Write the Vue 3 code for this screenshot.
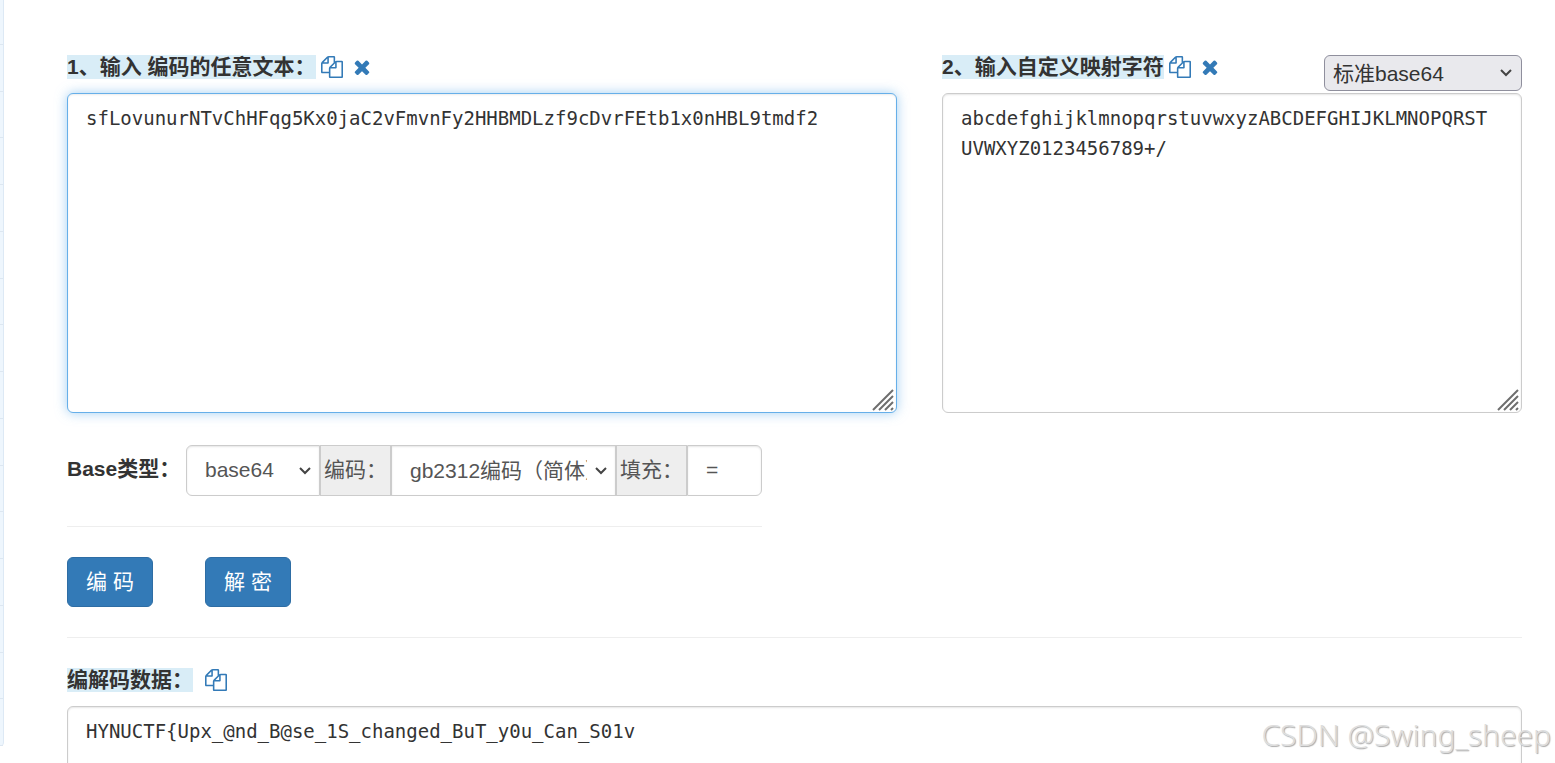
<script setup>
import { ref } from 'vue'

const source = ref('sfLovunurNTvChHFqg5Kx0jaC2vFmvnFy2HHBMDLzf9cDvrFEtb1x0nHBL9tmdf2')
const mapping = ref('abcdefghijklmnopqrstuvwxyzABCDEFGHIJKLMNOPQRSTUVWXYZ0123456789+/')
const output = ref('HYNUCTF{Upx_@nd_B@se_1S_changed_BuT_y0u_Can_S01v')
const padChar = ref('=')

const copyPath =
  'M1696 384q40 0 68 28t28 68v1216q0 40-28 68t-68 28h-960q-40 0-68-28t-28-68v-288h-544q-40 0-68-28t-28-68v-672q0-40 20-88t48-76l408-408q28-28 76-48t88-20h416q40 0 68 28t28 68v328q68-40 128-40h416zm-544 213l-299 299h299v-299zm-640-384l-299 299h299v-299zm196 647l316-316v-416h-384v416q0 40-28 68t-68 28h-416v640h512v-256q0-40 20-88t48-76zm956 804v-1152h-384v416q0 40-28 68t-68 28h-416v640h896z'
const timesPath =
  'M1490 1322q0 40-28 68l-136 136q-28 28-68 28t-68-28l-294-294-294 294q-28 28-68 28t-68-28l-136-136q-28-28-28-68t28-68l294-294-294-294q-28-28-28-68t28-68l136-136q28-28 68-28t68 28l294 294 294-294q28-28 68-28t68 28l136 136q28 28 28 68t-28 68l-294 294 294 294q28 28 28 68z'
</script>

<template>
  <div class="page">
    <ul class="side">
      <li v-for="n in 16" :key="n"></li>
    </ul>

    <main class="content">
      <section class="editors">
        <div class="editor">
          <div class="head">
            <label for="source" class="mark">1、输入 编码的任意文本：</label>
            <button type="button" class="icon" aria-label="复制">
              <svg viewBox="0 0 1792 1792"><path :d="copyPath" /></svg>
            </button>
            <button type="button" class="icon clear" aria-label="清空">
              <svg viewBox="0 0 1792 1792"><path :d="timesPath" /></svg>
            </button>
          </div>
          <div class="area">
            <textarea id="source" v-model="source" class="box active" spellcheck="false"></textarea>
            <svg class="grip" viewBox="0 0 24 24"><path d="M2 22L22 2M8 22L22 8M14 22L22 14M20 22L22 20" /></svg>
          </div>
        </div>

        <div class="editor">
          <div class="head">
            <label for="mapping" class="mark">2、输入自定义映射字符</label>
            <button type="button" class="icon" aria-label="复制">
              <svg viewBox="0 0 1792 1792"><path :d="copyPath" /></svg>
            </button>
            <button type="button" class="icon clear" aria-label="清空">
              <svg viewBox="0 0 1792 1792"><path :d="timesPath" /></svg>
            </button>
            <span class="pick preset">
              <select aria-label="映射表"><option>标准base64</option></select>
              <svg viewBox="0 0 12 8"><path d="M1 1l5 5 5-5" /></svg>
            </span>
          </div>
          <div class="area">
            <textarea id="mapping" v-model="mapping" class="box" spellcheck="false"></textarea>
            <svg class="grip" viewBox="0 0 24 24"><path d="M2 22L22 2M8 22L22 8M14 22L22 14M20 22L22 20" /></svg>
          </div>
        </div>
      </section>

      <section class="options">
        <label for="base" class="title">Base类型：</label>
        <span class="pick base">
          <select id="base"><option>base64</option></select>
          <svg viewBox="0 0 12 8"><path d="M1 1l5 5 5-5" /></svg>
        </span>
        <label for="charset" class="addon">编码：</label>
        <span class="pick charset">
          <select id="charset"><option>gb2312编码（简体）</option></select>
          <svg viewBox="0 0 12 8"><path d="M1 1l5 5 5-5" /></svg>
        </span>
        <label for="pad" class="addon">填充：</label>
        <input id="pad" v-model="padChar" class="pad" type="text" />
      </section>

      <section class="actions">
        <button type="button" class="btn">编 码</button>
        <button type="button" class="btn">解 密</button>
      </section>

      <section class="result">
        <div class="head">
          <label for="output" class="mark">编解码数据：</label>
          <button type="button" class="icon spaced" aria-label="复制">
            <svg viewBox="0 0 1792 1792"><path :d="copyPath" /></svg>
          </button>
        </div>
        <textarea id="output" v-model="output" class="box" spellcheck="false"></textarea>
      </section>
    </main>

    <div class="watermark">CSDN @Swing_sheep</div>
  </div>
</template>

<style>
body {
  margin: 0;
  background: #fff;
}
</style>

<style scoped>
.page,
.page * {
  box-sizing: border-box;
}
.page {
  position: relative;
  display: flex;
  align-items: flex-start;
  height: 100vh;
  overflow: hidden;
  color: #333;
  font: 21px/30px "Liberation Sans", Arial, "Noto Sans CJK SC", sans-serif;
}
button,
select,
input {
  font: inherit;
  color: inherit;
}
.side {
  display: flex;
  flex: none;
  flex-direction: column;
  width: 4px;
  height: 748px;
  margin: -2px 0 0;
  padding: 0;
  list-style: none;
  background: #eef6fd;
  border-right: 1px solid #dde9f5;
  border-bottom-right-radius: 4px;
}
.side li {
  flex: 1;
  border-bottom: 1px solid #dde7f1;
}
.content {
  flex: 1;
  min-width: 0;
  padding: 55px 33px 0 63px;
}
.editors {
  display: grid;
  grid-template-columns: minmax(0, 830fr) minmax(0, 580fr);
  gap: 45px;
}
.head {
  display: flex;
  align-items: flex-start;
  height: 38px;
}
.mark {
  height: 24px;
  line-height: 24px;
  font-weight: 700;
  white-space: nowrap;
  background: #d9edf7;
}
.icon {
  width: 22px;
  height: 24px;
  margin-left: 5px;
  padding: 0;
  border: 0;
  background: none;
  cursor: pointer;
}
.icon.clear {
  margin-left: 8px;
}
.icon.spaced {
  margin-left: 12px;
}
.icon svg {
  display: block;
  width: 22px;
  height: 22px;
  fill: #337ab7;
}
.area {
  position: relative;
}
.box {
  display: block;
  width: 100%;
  height: 320px;
  margin: 0;
  padding: 9px 24px 9px 18px;
  resize: none;
  overflow: hidden;
  outline: 0;
  color: #333;
  font: 19px/30px Consolas, "DejaVu Sans Mono", monospace;
  word-break: break-all;
  background: #fff;
  border: 1px solid #ccc;
  border-radius: 6px;
  box-shadow: inset 0 1px 2px rgba(0, 0, 0, 0.1);
}
.box.active {
  border-color: #66afe9;
  box-shadow: inset 0 1px 2px rgba(0, 0, 0, 0.08), 0 0 12px rgba(102, 175, 233, 0.6);
}
.grip {
  position: absolute;
  right: 2px;
  bottom: 1px;
  width: 24px;
  height: 24px;
  fill: none;
  stroke: #6e6e6e;
  stroke-width: 2;
  pointer-events: none;
}
.pick {
  position: relative;
  flex: none;
}
.pick select {
  display: block;
  width: 100%;
  height: 100%;
  margin: 0;
  appearance: none;
  outline: 0;
  background: #fff;
  border: 1px solid #ccc;
  border-radius: 0;
}
.pick svg {
  position: absolute;
  right: 9px;
  top: 50%;
  width: 12px;
  height: 8px;
  margin-top: -4px;
  fill: none;
  stroke: #444;
  stroke-width: 2;
  pointer-events: none;
}
.preset {
  width: 198px;
  height: 36px;
  margin-left: auto;
}
.preset select {
  padding: 2px 28px 0 8px;
  background: #e9e9ed;
  border-color: #8f8f9d;
  border-radius: 6px;
}
.preset svg {
  right: 10px;
}
.options {
  display: flex;
  width: fit-content;
  margin-top: 32px;
  padding-bottom: 30px;
  border-bottom: 1px solid #eee;
  color: #555;
}
.title {
  width: 119px;
  line-height: 48px;
  font-weight: 700;
  color: #333;
  white-space: nowrap;
}
.base,
.charset {
  height: 51px;
}
.base {
  width: 134px;
}
.charset {
  width: 225px;
}
.base select,
.charset select {
  padding: 0 28px 0 18px;
  box-shadow: inset 0 1px 2px rgba(0, 0, 0, 0.1);
}
.base select {
  padding-bottom: 2px;
  border-radius: 6px 0 0 6px;
}
.addon {
  width: 71px;
  padding-left: 3px;
  line-height: 47px;
  white-space: nowrap;
  background: #eee;
  border: 1px solid #ccc;
}
.pad {
  width: 75px;
  padding: 0 18px 2px;
  outline: 0;
  background: #fff;
  border: 1px solid #ccc;
  border-radius: 0 6px 6px 0;
  box-shadow: inset 0 1px 2px rgba(0, 0, 0, 0.1);
}
.actions {
  display: flex;
  gap: 52px;
  padding: 30px 0;
  border-bottom: 1px solid #eee;
}
.btn {
  width: 86px;
  height: 50px;
  padding: 0;
  color: #fff;
  background: #337ab7;
  border: 1px solid #2e6da4;
  border-radius: 6px;
  cursor: pointer;
}
.result {
  padding-top: 30px;
}
.watermark {
  position: absolute;
  right: 4px;
  bottom: 8px;
  font: 300 30px/40px "Noto Sans", sans-serif;
  color: #dedede;
  text-shadow: 1px 1px 1px #aaa;
  pointer-events: none;
}
</style>
